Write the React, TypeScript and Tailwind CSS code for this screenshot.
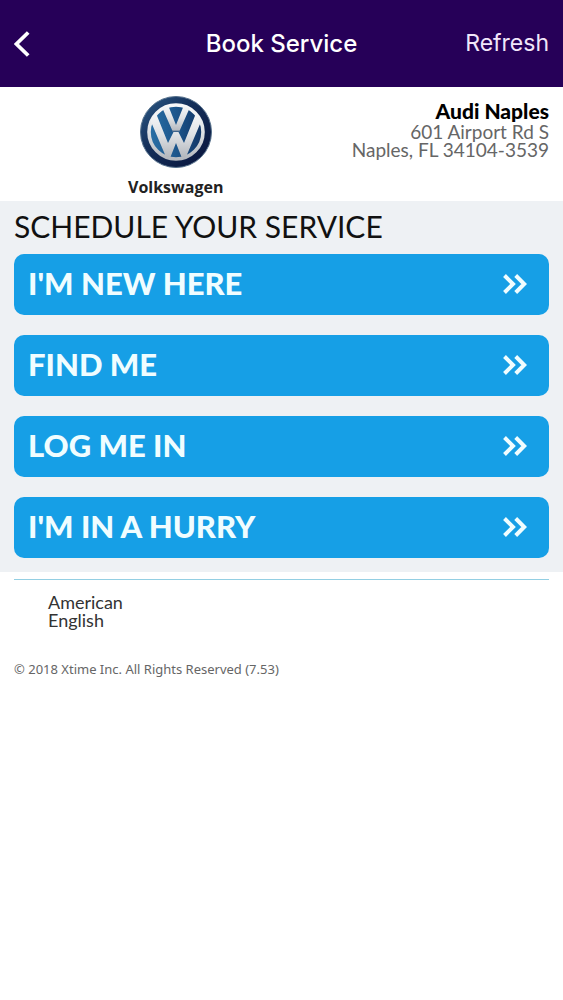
const actions = ["I'M NEW HERE", 'FIND ME', 'LOG ME IN', "I'M IN A HURRY"];

function BackIcon() {
  return (
    <svg width="16" height="26" viewBox="0 0 16 26" fill="none" stroke="#fff" strokeWidth="3.8" aria-hidden="true">
      <path d="M14.2 1.5 2.400 13l11.800 11.500" />
    </svg>
  );
}

function DoubleChevron() {
  return (
    <svg width="24" height="20" viewBox="0 0 24 20" fill="none" stroke="#f0fdff" strokeWidth="4" aria-hidden="true">
      <path d="M1.500 1.500 10 10l-8.500 8.500M12.700 1.500 21.200 10l-8.500 8.500" />
    </svg>
  );
}

function VolkswagenMark() {
  return (
    <svg width="74" height="74" viewBox="0 0 74 74" role="img" aria-label="Volkswagen logo">
      <defs>
        <linearGradient id="rim" x1="0" y1="0" x2="1" y2="1">
          <stop offset="0" stopColor="#2d5c88" />
          <stop offset="0.4" stopColor="#15305a" />
          <stop offset="1" stopColor="#08123a" />
        </linearGradient>
        <linearGradient id="field" x1="0" y1="0" x2="1" y2="0">
          <stop offset="0" stopColor="#2a70a6" />
          <stop offset="0.5" stopColor="#1c568c" />
          <stop offset="1" stopColor="#123463" />
        </linearGradient>
        <linearGradient id="chrome" x1="0" y1="0" x2="0" y2="1">
          <stop offset="0" stopColor="#f7f8f9" />
          <stop offset="0.5" stopColor="#dfe2e5" />
          <stop offset="1" stopColor="#b4b8be" />
        </linearGradient>
        <clipPath id="disc">
          <circle cx="37" cy="37" r="28" />
        </clipPath>
      </defs>
      <circle cx="37" cy="37" r="35.500" fill="url(#rim)" stroke="#56718c" strokeWidth="1" />
      <circle cx="37" cy="37" r="27" fill="url(#field)" stroke="url(#chrome)" strokeWidth="3.600" />
      <g clipPath="url(#disc)" fill="url(#chrome)">
        <path d="M22 10h7l8 20 8-20h7L40.500 36h-7Z" />
        <path d="M10 22l6.500-5 12.500 31 5.500-11h5L45 48l12.500-31 6.500 5-17 40h-4.500L37 48 31.500 62H27Z" />
      </g>
      <path d="M33 36.200h8" stroke="#48688c" strokeWidth="1.200" />
    </svg>
  );
}

export default function App() {
  return (
    <div className="min-h-screen bg-white font-['Lato',sans-serif]">
      <header className="grid h-[87px] grid-cols-[1fr_auto_1fr] items-center bg-[#260058] px-3.5 font-['Inter',sans-serif] text-white">
        <button type="button" aria-label="Back" className="justify-self-start">
          <BackIcon />
        </button>
        <h1 className="text-[24px] font-medium">Book Service</h1>
        <button type="button" className="justify-self-end text-[23px] text-[#f1e6fa]">
          Refresh
        </button>
      </header>

      <main>
        <section className="flex h-[114px] items-start justify-between px-3.5">
          <div className="ml-[114px] flex flex-col items-center pt-2">
            <VolkswagenMark />
            <p className="mt-2 font-['Open_Sans',sans-serif] text-[16px] leading-5 font-bold text-[#222]">Volkswagen</p>
          </div>
          <address className="pt-3 text-right text-[19px] leading-[18px] text-[#666] not-italic">
            <strong className="block text-[21px] leading-6 font-black text-black">Audi Naples</strong>
            601 Airport Rd S<br />
            Naples, FL 34104-3539
          </address>
        </section>

        <section className="bg-[#eef1f4] px-3.5 pt-[7px] pb-3.5">
          <h2 className="text-[30px] leading-9 text-[#111]">SCHEDULE YOUR SERVICE</h2>
          <div className="mt-2.5 flex flex-col gap-5">
            {actions.map((label) => (
              <button
                key={label}
                type="button"
                className="flex h-[61px] items-center justify-between rounded-[10px] bg-[#169fe6] pr-[22px] pb-0.5 pl-3.5 text-[31px] font-black text-[#f0fdff]"
              >
                <span>{label}</span>
                <DoubleChevron />
              </button>
            ))}
          </div>
        </section>
      </main>

      <footer className="px-3.5 pt-[7px]">
        <div className="border-t border-solid border-t-[#93cfe3] pt-[13px]">
          <a href="#language" className="ml-[34px] block w-24 text-[18px] leading-[18px] text-[#333]">
            American English
          </a>
          <p className="mt-[30px] font-['Noto_Sans',sans-serif] text-[13px] leading-5 text-[#666]">
            © 2018 Xtime Inc. All Rights Reserved (7.53)
          </p>
        </div>
      </footer>
    </div>
  );
}
